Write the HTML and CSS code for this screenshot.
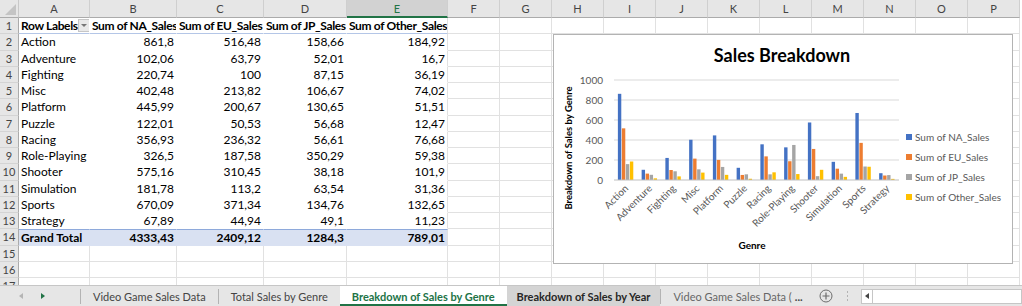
FILE: index.html
```html
<!DOCTYPE html>
<html lang="en">
<head>
    <meta charset="UTF-8">
    <meta name="viewport" content="width=device-width, initial-scale=1.0">
    <title>Breakdown of Sales by Genre</title>
    <link rel="stylesheet" href="styles.css">
</head>
<body>
    <div class="workbook">
        <!-- Worksheet grid with the pivot table -->
        <div class="sheet">
            <div class="grid" id="grid"></div>

            <!-- Clustered column chart floating over the cells -->
            <div class="chart">
                <svg id="chart" width="458" height="228" viewBox="0 0 458 228"></svg>
            </div>
        </div>

        <!-- Sheet tabs -->
        <div class="tabbar">
            <div class="tab-nav">
                <span class="nav-arrow nav-left"></span>
                <span class="nav-arrow nav-right"></span>
            </div>
            <span class="sep"></span>
            <div class="tab">Video Game Sales Data</div>
            <span class="sep"></span>
            <div class="tab">Total Sales by Genre</div>
            <div class="tab active">Breakdown of Sales by Genre</div>
            <div class="tab hover">Breakdown of Sales by Year</div>
            <span class="sep"></span>
            <div class="tab clipped">Video Game Sales Data (</div>
            <div class="more">...</div>
            <div class="add-sheet">
                <svg width="14" height="14" viewBox="0 0 14 14">
                    <circle cx="7" cy="7" r="6" fill="none" stroke="#6d6d6d" stroke-width="1"/>
                    <path d="M7 3.5v7M3.5 7h7" stroke="#6d6d6d" stroke-width="1.2"/>
                </svg>
            </div>
            <div class="split-dots"><span></span><span></span><span></span></div>
            <div class="hscroll">
                <span class="scroll-btn"></span>
            </div>
        </div>
    </div>

    <script>
        const genres = [
            ["Action", 861.8, 516.48, 158.66, 184.92],
            ["Adventure", 102.06, 63.79, 52.01, 16.7],
            ["Fighting", 220.74, 100, 87.15, 36.19],
            ["Misc", 402.48, 213.82, 106.67, 74.02],
            ["Platform", 445.99, 200.67, 130.65, 51.51],
            ["Puzzle", 122.01, 50.53, 56.68, 12.47],
            ["Racing", 356.93, 236.32, 56.61, 76.68],
            ["Role-Playing", 326.5, 187.58, 350.29, 59.38],
            ["Shooter", 575.16, 310.45, 38.18, 101.9],
            ["Simulation", 181.78, 113.2, 63.54, 31.36],
            ["Sports", 670.09, 371.34, 134.76, 132.65],
            ["Strategy", 67.89, 44.94, 49.1, 11.23]
        ];
        const grandTotal = ["Grand Total", 4333.43, 2409.12, 1284.3, 789.01];

        const series = [
            { name: "Sum of NA_Sales", color: "#4472c4" },
            { name: "Sum of EU_Sales", color: "#ed7d31" },
            { name: "Sum of JP_Sales", color: "#a5a5a5" },
            { name: "Sum of Other_Sales", color: "#ffc000" }
        ];

        const columns = "ABCDEFGHIJKLMNOP".split("");

        function fmt(n) {
            return String(n).replace(".", ",");
        }

        function cell(cls, text) {
            return `<div class="cell ${cls}">${text}</div>`;
        }

        function buildGrid() {
            let html = '<div class="corner"></div>';
            columns.forEach(c => {
                html += `<div class="col-head${c === "E" ? " selected" : ""}">${c}</div>`;
            });

            for (let r = 1; r <= 17; r++) {
                html += `<div class="row-head">${r}</div>`;
                columns.forEach((c, i) => {
                    const inPivot = i < 5 && r <= 14;
                    let cls = inPivot ? "pv" : "";
                    if (c === "E" && inPivot) cls += " pv-edge";
                    let text = "";

                    if (r === 1 && i < 5) {
                        cls += " pv-head";
                        if (i === 0) {
                            text = 'Row Labels<span class="dropdown"></span>';
                        } else {
                            text = series[i - 1].name;
                        }
                    } else if (r >= 2 && r <= 13 && i < 5) {
                        const row = genres[r - 2];
                        text = i === 0 ? row[0] : fmt(row[i]);
                        if (i > 0) cls += " num";
                    } else if (r === 14 && i < 5) {
                        cls += " pv-total";
                        text = i === 0 ? grandTotal[0] : fmt(grandTotal[i]);
                        if (i > 0) cls += " num";
                    }
                    html += cell(cls, text);
                });
            }
            document.getElementById("grid").innerHTML = html;
        }

        function buildChart() {
            const x0 = 60, x1 = 345, base = 145, scale = 0.1;
            const cw = (x1 - x0) / genres.length;
            const bw = 4;
            let out = "";

            out += '<text class="chart-title" x="228" y="27" text-anchor="middle">Sales Breakdown</text>';

            for (let v = 0; v <= 1000; v += 200) {
                const y = base - v * scale;
                if (v > 0) {
                    out += `<line class="gridline" x1="${x0}" x2="${x1}" y1="${y}" y2="${y}"/>`;
                }
                out += `<text class="tick" x="49" y="${y + 3.5}" text-anchor="end">${v}</text>`;
            }

            genres.forEach((g, i) => {
                const cx = x0 + cw * i + cw / 2;
                for (let s = 0; s < 4; s++) {
                    const h = g[s + 1] * scale;
                    const x = cx - 2 * bw + s * bw;
                    out += `<rect x="${x.toFixed(2)}" y="${(base - h).toFixed(2)}" width="3.4" height="${h.toFixed(2)}" fill="${series[s].color}"/>`;
                }
                out += `<text class="cat" text-anchor="end" transform="translate(${(cx + 3).toFixed(2)},${base + 9}) rotate(-45)">${g[0]}</text>`;
            });

            out += `<line class="axis" x1="${x0}" x2="${x1}" y1="${base}" y2="${base}"/>`;

            out += '<text class="axis-title y-title" text-anchor="middle" transform="translate(18,113) rotate(-90)">Breakdown of Sales by Genre</text>';
            out += '<text class="axis-title" x="198" y="214" text-anchor="middle">Genre</text>';

            series.forEach((s, i) => {
                const y = 102 + i * 20;
                out += `<rect x="352" y="${y - 3}" width="6" height="6" fill="${s.color}"/>`;
                out += `<text class="legend" x="361" y="${y + 3.5}">${s.name}</text>`;
            });

            document.getElementById("chart").innerHTML = out;
        }

        buildGrid();
        buildChart();
    </script>
</body>
</html>
```

FILE: styles.css
```css
* {
    box-sizing: border-box;
    margin: 0;
    padding: 0;
}

body {
    width: 1022px;
    height: 306px;
    overflow: hidden;
    background-color: #fff;
    font-family: Lato, "Open Sans", sans-serif;
    color: #000;
}

.workbook {
    height: 306px;
    display: flex;
    flex-direction: column;
}

.sheet {
    position: relative;
    height: 285px;
    overflow: hidden;
}

/* grid */

.grid {
    display: grid;
    grid-template-columns: 19px 71px 87px 87px 83px 101px repeat(11, 52px);
    grid-template-rows: 18px repeat(17, 16.25px);
    font-size: 12px;
}

.corner {
    position: relative;
    background-color: #e6e6e6;
    border-right: 1px solid #c8c8c8;
    border-bottom: 1px solid #ababab;
}

.corner::after {
    content: "";
    position: absolute;
    right: 2px;
    bottom: 2px;
    border-style: solid;
    border-width: 0 0 11px 11px;
    border-color: transparent transparent #c4c4c4 transparent;
}

.col-head {
    display: flex;
    align-items: center;
    justify-content: center;
    background-color: #e6e6e6;
    border-right: 1px solid #cfcfcf;
    border-bottom: 1px solid #ababab;
    color: #444;
    font-size: 11px;
}

.col-head.selected {
    background-color: #d2d2d2;
    color: #217346;
    border-bottom: 2px solid #217346;
}

.row-head {
    display: flex;
    align-items: center;
    justify-content: center;
    background-color: #e6e6e6;
    border-right: 1px solid #ababab;
    border-bottom: 1px solid #d4d4d4;
    color: #444;
    font-size: 11px;
}

.cell {
    display: flex;
    align-items: center;
    padding: 0 2px;
    border-right: 1px solid #e1e1e1;
    border-bottom: 1px solid #e1e1e1;
    white-space: nowrap;
    overflow: hidden;
}

/* pivot table */

.pv {
    border-color: transparent;
}

.pv-edge {
    border-right-color: #e1e1e1;
}

.num {
    justify-content: flex-end;
}

.pv-head {
    font-weight: bold;
    letter-spacing: -0.35px;
    padding: 0 1px 0 2px;
    border-bottom-color: #b4c6e7;
}

.pv-head .dropdown {
    position: relative;
    flex: 0 0 12px;
    height: 13px;
    margin-left: auto;
    background-color: #e9e9e9;
    border: 1px solid #c6c6c6;
}

.pv-head .dropdown::after {
    content: "";
    position: absolute;
    left: 2px;
    top: 4px;
    border-style: solid;
    border-width: 3px 3px 0 3px;
    border-color: #777 transparent transparent transparent;
}

.pv-total {
    font-weight: bold;
    background-color: #d9e1f2;
    border-top: 1px solid #8ea9db;
}

/* chart */

.chart {
    position: absolute;
    left: 553px;
    top: 34px;
    width: 460px;
    height: 230px;
    background-color: #fff;
    border: 1px solid #b3b3b3;
}

.chart svg {
    display: block;
    font-family: Lato, "Open Sans", sans-serif;
}

.chart-title {
    font-size: 18px;
    font-weight: bold;
    fill: #000;
}

.gridline {
    stroke: #d9d9d9;
    stroke-width: 1;
}

.axis {
    stroke: #bfbfbf;
    stroke-width: 1;
}

.tick, .cat, .legend {
    font-size: 10px;
    fill: #595959;
}

.axis-title {
    font-size: 10px;
    font-weight: bold;
    fill: #000;
}

.y-title {
    font-size: 9.5px;
}

/* sheet tabs */

.tabbar {
    display: flex;
    align-items: stretch;
    height: 21px;
    background-color: #e6e6e6;
    border-top: 1px solid #c6c6c6;
    font-size: 11px;
    color: #444;
}

.tab-nav {
    display: flex;
    align-items: center;
    width: 80px;
    padding-left: 19px;
    gap: 18px;
}

.nav-arrow {
    border-style: solid;
}

.nav-left {
    border-width: 3px 4px 3px 0;
    border-color: transparent #b5b5b5 transparent transparent;
}

.nav-right {
    border-width: 3px 0 3px 4px;
    border-color: transparent transparent transparent #217346;
}

.sep {
    align-self: center;
    width: 1px;
    height: 15px;
    background-color: #b3b3b3;
}

.tab {
    display: flex;
    align-items: center;
    padding: 0 12px;
    white-space: nowrap;
}

.tab.active {
    background-color: #fff;
    color: #217346;
    font-weight: bold;
    border-bottom: 2px solid #217346;
    padding-top: 2px;
}

.tab.hover {
    background-color: #d4d4d4;
    color: #262626;
    font-weight: bold;
    padding: 0 10px;
}

.tab.clipped {
    color: #666;
    padding-right: 3px;
}

.more {
    display: flex;
    align-items: center;
    color: #444;
    font-weight: bold;
}

.add-sheet {
    display: flex;
    align-items: center;
    padding: 0 6px 0 16px;
}

.split-dots {
    display: flex;
    flex-direction: column;
    justify-content: center;
    gap: 2px;
    padding: 0 8px;
}

.split-dots span {
    width: 1px;
    height: 2px;
    background-color: #b3b3b3;
}

.hscroll {
    flex: 1;
    display: flex;
    align-self: center;
    height: 15px;
    margin-left: 5px;
    background-color: #fff;
    border: 1px solid #c6c6c6;
}

.scroll-btn {
    position: relative;
    width: 11px;
    border-right: 1px solid #c6c6c6;
}

.scroll-btn::after {
    content: "";
    position: absolute;
    left: 3px;
    top: 3px;
    border-style: solid;
    border-width: 3.5px 4px 3.5px 0;
    border-color: transparent #444 transparent transparent;
}
```
